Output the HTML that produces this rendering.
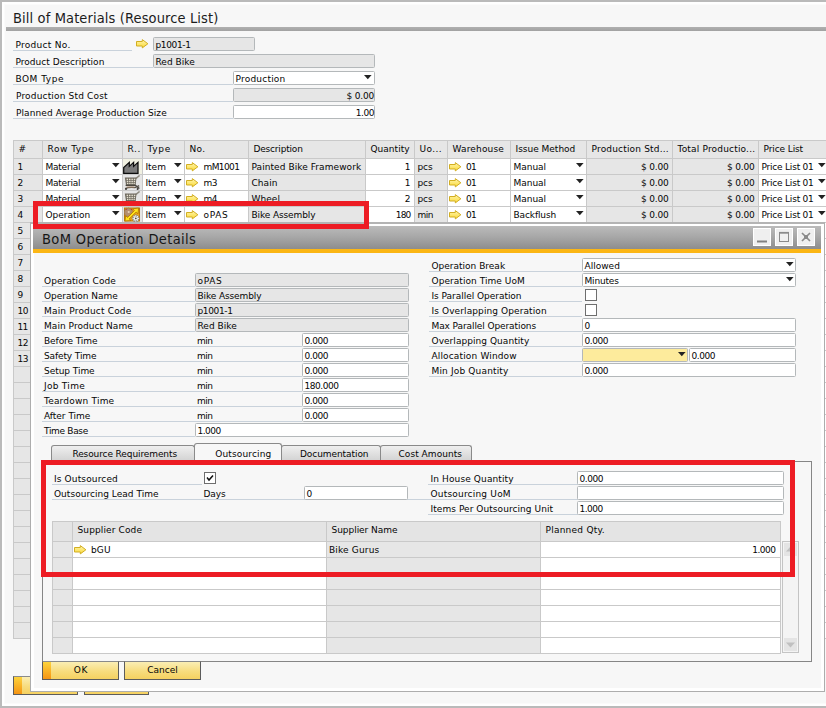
<!DOCTYPE html>
<html><head><meta charset="utf-8"><title>Bill of Materials (Resource List)</title>
<style>
html,body{margin:0;padding:0}
body{width:826px;height:708px;overflow:hidden;background:#f7f7f7;position:relative;font-family:"DejaVu Sans","Liberation Sans",sans-serif;font-size:9px;letter-spacing:0;line-height:12px;color:#050505}
div,svg{position:absolute;box-sizing:border-box}
.t{white-space:nowrap;line-height:12px}
.lb{height:14px;border-bottom:1px solid #c9d2db;white-space:nowrap;line-height:12px;padding-top:2px}
.fd{height:14px;border:1px solid #b4b8ba;border-radius:1.5px;background:#fff;line-height:12px;padding:1px 2px 0 1.5px;white-space:nowrap}
.fd.dis{background:#e6e6e6}
.fd.r{text-align:right;padding-right:0}
.fd.y{background:#fdeb9c}
.ttl{font-family:"DejaVu Sans Condensed","Liberation Sans",sans-serif;font-size:14.5px;line-height:20px;color:#1c1c1c;white-space:nowrap;letter-spacing:0}
.g{background:#e6e6e6}
.w{background:#fff}
.hl{background:#c9c9c9;height:1px}
.vl{background:#c9c9c9;width:1px}
.red{border:5px solid #ed1c24}
.cb{width:12px;height:12px;border:1px solid #6e6e6e;background:#fff}
.btn{border:1px solid #5c5c5c;background:linear-gradient(#fbeeb4,#f7dc7e 55%,#f5d160);text-align:center;line-height:17px;height:19px;border-top-color:#8a8a8a}
.btn i{position:absolute;left:0;top:0;width:8px;height:17px;background:linear-gradient(#fdd33c,#f59413)}
.tab{border:1px solid #8a8a8a;border-bottom:none;border-radius:3px 3px 0 0;background:linear-gradient(#efefef,#d2d2d2);text-align:center;white-space:nowrap}
.tab.on{background:#f7f7f7}
.wb{width:18px;height:18px;border:1px solid #fff;background:#efefef}
</style></head><body>
<svg width="0" height="0" style="left:0;top:0"><defs><linearGradient id="ag" x1="0" y1="0" x2="0" y2="1"><stop offset="0" stop-color="#fff6b0"/><stop offset="1" stop-color="#fbd935"/></linearGradient></defs></svg>

<!-- main window -->
<div class="" style="left:0px;top:0px;width:840px;height:708px;border:2px solid #bababa;border-right:none;box-shadow:inset 0 0 0 2px #fff, inset 0 0 0 3px #fbfbfb"></div>
<div class="ttl" style="left:13px;top:8px;letter-spacing:0.12px">Bill of Materials (Resource List)</div>
<div class="" style="left:6px;top:27px;width:830px;height:4px;background:linear-gradient(#b0b0b0,#a2a2a2)"></div>
<div class="lb" style="left:13px;top:37px;width:119px;padding-left:2.5px;letter-spacing:0.28px;">Product No.</div>
<div class="lb" style="left:13px;top:54px;width:140px;padding-left:2.5px;letter-spacing:0.03px;">Product Description</div>
<div class="lb" style="left:13px;top:71px;width:220px;padding-left:2.5px;letter-spacing:0.51px;">BOM Type</div>
<div class="lb" style="left:13px;top:88px;width:220px;padding-left:3px;letter-spacing:0.17px;">Production Std Cost</div>
<div class="lb" style="left:13px;top:105px;width:220px;padding-left:3px;letter-spacing:0.09px;">Planned Average Production Size</div>
<svg class="ar" style="left:136px;top:39px" width="13" height="10" viewBox="0 0 13 10"><path d="M0.5 2.5H6.3V0.6L11.9 4.75L6.3 8.9V7H0.5Z" fill="url(#ag)" stroke="#d2ae22" stroke-width="1" stroke-linejoin="round"/></svg>
<div class="fd dis" style="left:153px;top:37px;width:102px;letter-spacing:-0.37px;">p1001-1</div>
<div class="fd dis" style="left:153px;top:54px;width:222px;letter-spacing:0.02px;">Red Bike</div>
<div class="fd" style="left:233px;top:71px;width:142px;letter-spacing:0.21px;">Production</div>
<svg class="ar" style="left:364px;top:75px" width="8" height="5" viewBox="0 0 8 5"><path d="M0 0H7.6L3.8 4.3Z" fill="#222"/></svg>
<div class="fd dis r" style="left:233px;top:88px;width:142px;letter-spacing:-0.19px;">$ 0.00</div>
<div class="fd r" style="left:233px;top:105px;width:142px;letter-spacing:-0.46px;">1.00</div>
<!-- main grid -->
<div class="g" style="left:13px;top:140px;width:827px;height:499px;"></div>
<div class="w" style="left:42px;top:158px;width:80px;height:480px;"></div>
<div class="w" style="left:142px;top:158px;width:42px;height:480px;"></div>
<div class="w" style="left:184px;top:158px;width:64px;height:480px;"></div>
<div class="w" style="left:365px;top:158px;width:49px;height:480px;"></div>
<div class="w" style="left:447px;top:158px;width:63px;height:480px;"></div>
<div class="w" style="left:510px;top:158px;width:76px;height:480px;"></div>
<div class="w" style="left:758px;top:158px;width:82px;height:480px;"></div>
<div class="" style="left:122px;top:158px;width:20px;height:16px;background:#f1f1e2"></div>
<div class="hl" style="left:13px;top:140px;width:827px;height:1px;"></div>
<div class="hl" style="left:13px;top:158px;width:827px;height:1px;"></div>
<div class="hl" style="left:13px;top:174px;width:827px;height:1px;"></div>
<div class="hl" style="left:13px;top:190px;width:827px;height:1px;"></div>
<div class="hl" style="left:13px;top:206px;width:827px;height:1px;"></div>
<div class="hl" style="left:13px;top:222px;width:827px;height:1px;"></div>
<div class="hl" style="left:13px;top:238px;width:827px;height:1px;"></div>
<div class="hl" style="left:13px;top:254px;width:827px;height:1px;"></div>
<div class="hl" style="left:13px;top:270px;width:827px;height:1px;"></div>
<div class="hl" style="left:13px;top:286px;width:827px;height:1px;"></div>
<div class="hl" style="left:13px;top:302px;width:827px;height:1px;"></div>
<div class="hl" style="left:13px;top:318px;width:827px;height:1px;"></div>
<div class="hl" style="left:13px;top:334px;width:827px;height:1px;"></div>
<div class="hl" style="left:13px;top:350px;width:827px;height:1px;"></div>
<div class="hl" style="left:13px;top:366px;width:827px;height:1px;"></div>
<div class="hl" style="left:13px;top:382px;width:827px;height:1px;"></div>
<div class="hl" style="left:13px;top:398px;width:827px;height:1px;"></div>
<div class="hl" style="left:13px;top:414px;width:827px;height:1px;"></div>
<div class="hl" style="left:13px;top:430px;width:827px;height:1px;"></div>
<div class="hl" style="left:13px;top:446px;width:827px;height:1px;"></div>
<div class="hl" style="left:13px;top:462px;width:827px;height:1px;"></div>
<div class="hl" style="left:13px;top:478px;width:827px;height:1px;"></div>
<div class="hl" style="left:13px;top:494px;width:827px;height:1px;"></div>
<div class="hl" style="left:13px;top:510px;width:827px;height:1px;"></div>
<div class="hl" style="left:13px;top:526px;width:827px;height:1px;"></div>
<div class="hl" style="left:13px;top:542px;width:827px;height:1px;"></div>
<div class="hl" style="left:13px;top:558px;width:827px;height:1px;"></div>
<div class="hl" style="left:13px;top:574px;width:827px;height:1px;"></div>
<div class="hl" style="left:13px;top:590px;width:827px;height:1px;"></div>
<div class="hl" style="left:13px;top:606px;width:827px;height:1px;"></div>
<div class="hl" style="left:13px;top:622px;width:827px;height:1px;"></div>
<div class="hl" style="left:13px;top:638px;width:827px;height:1px;"></div>
<div class="vl" style="left:13px;top:140px;width:1px;height:499px;"></div>
<div class="vl" style="left:42px;top:140px;width:1px;height:499px;"></div>
<div class="vl" style="left:122px;top:140px;width:1px;height:499px;"></div>
<div class="vl" style="left:142px;top:140px;width:1px;height:499px;"></div>
<div class="vl" style="left:184px;top:140px;width:1px;height:499px;"></div>
<div class="vl" style="left:248px;top:140px;width:1px;height:499px;"></div>
<div class="vl" style="left:365px;top:140px;width:1px;height:499px;"></div>
<div class="vl" style="left:414px;top:140px;width:1px;height:499px;"></div>
<div class="vl" style="left:447px;top:140px;width:1px;height:499px;"></div>
<div class="vl" style="left:510px;top:140px;width:1px;height:499px;"></div>
<div class="vl" style="left:586px;top:140px;width:1px;height:499px;"></div>
<div class="vl" style="left:672px;top:140px;width:1px;height:499px;"></div>
<div class="vl" style="left:758px;top:140px;width:1px;height:499px;"></div>
<div class="t " style="left:18.5px;top:143px;">#</div>
<div class="t " style="left:47.5px;top:143px;letter-spacing:0.54px;">Row Type</div>
<div class="t " style="left:127.5px;top:143px;letter-spacing:0.61px;">R..</div>
<div class="t " style="left:147.5px;top:143px;letter-spacing:0.68px;">Type</div>
<div class="t " style="left:189.5px;top:143px;letter-spacing:0.35px;">No.</div>
<div class="t " style="left:253.5px;top:143px;letter-spacing:-0.19px;">Description</div>
<div class="t " style="left:370.5px;top:143px;letter-spacing:0.02px;">Quantity</div>
<div class="t " style="left:419.5px;top:143px;letter-spacing:0.41px;">Uo...</div>
<div class="t " style="left:452.5px;top:143px;letter-spacing:0.17px;">Warehouse</div>
<div class="t " style="left:515.5px;top:143px;letter-spacing:-0.01px;">Issue Method</div>
<div class="t " style="left:591.5px;top:143px;letter-spacing:0.18px;">Production Std...</div>
<div class="t " style="left:677.5px;top:143px;letter-spacing:0.18px;">Total Productio...</div>
<div class="t " style="left:763.5px;top:143px;letter-spacing:-0.10px;">Price List</div>
<div class="t " style="left:17.5px;top:161px;">1</div>
<div class="t " style="left:45.5px;top:161px;letter-spacing:-0.23px;">Material</div>
<div class="t " style="left:145.5px;top:161px;letter-spacing:-0.03px;">Item</div>
<svg class="ar" style="left:186px;top:162px" width="13" height="10" viewBox="0 0 13 10"><path d="M0.5 2.5H6.3V0.6L11.9 4.75L6.3 8.9V7H0.5Z" fill="url(#ag)" stroke="#d2ae22" stroke-width="1" stroke-linejoin="round"/></svg>
<div class="t " style="left:203.5px;top:161px;letter-spacing:-0.59px;">mM1001</div>
<div class="t " style="left:251.5px;top:161px;letter-spacing:0.07px;">Painted Bike Framework</div>
<div class="t " style="left:365px;top:161px;width:45.5px;text-align:right;">1</div>
<div class="t " style="left:417.5px;top:161px;letter-spacing:-0.12px;">pcs</div>
<svg class="ar" style="left:449px;top:162px" width="13" height="10" viewBox="0 0 13 10"><path d="M0.5 2.5H6.3V0.6L11.9 4.75L6.3 8.9V7H0.5Z" fill="url(#ag)" stroke="#d2ae22" stroke-width="1" stroke-linejoin="round"/></svg>
<div class="t " style="left:466px;top:161px;letter-spacing:-0.73px;">01</div>
<div class="t " style="left:513.5px;top:161px;letter-spacing:-0.02px;">Manual</div>
<div class="t " style="left:586px;top:161px;width:82.5px;text-align:right;letter-spacing:-0.19px;">$ 0.00</div>
<div class="t " style="left:672px;top:161px;width:82.5px;text-align:right;letter-spacing:-0.19px;">$ 0.00</div>
<div class="t " style="left:761.5px;top:161px;letter-spacing:-0.21px;">Price List 01</div>
<svg class="ar" style="left:111.5px;top:163px" width="8" height="5" viewBox="0 0 8 5"><path d="M0 0H7.6L3.8 4.3Z" fill="#222"/></svg>
<svg class="ar" style="left:173.8px;top:163px" width="8" height="5" viewBox="0 0 8 5"><path d="M0 0H7.6L3.8 4.3Z" fill="#222"/></svg>
<svg class="ar" style="left:576.2px;top:163px" width="8" height="5" viewBox="0 0 8 5"><path d="M0 0H7.6L3.8 4.3Z" fill="#222"/></svg>
<svg class="ar" style="left:818.3px;top:163px" width="8" height="5" viewBox="0 0 8 5"><path d="M0 0H7.6L3.8 4.3Z" fill="#222"/></svg>
<div class="t " style="left:17.5px;top:177px;">2</div>
<div class="t " style="left:45.5px;top:177px;letter-spacing:-0.23px;">Material</div>
<div class="t " style="left:145.5px;top:177px;letter-spacing:-0.03px;">Item</div>
<svg class="ar" style="left:186px;top:178px" width="13" height="10" viewBox="0 0 13 10"><path d="M0.5 2.5H6.3V0.6L11.9 4.75L6.3 8.9V7H0.5Z" fill="url(#ag)" stroke="#d2ae22" stroke-width="1" stroke-linejoin="round"/></svg>
<div class="t " style="left:203.5px;top:177px;letter-spacing:-0.55px;">m3</div>
<div class="t " style="left:251.5px;top:177px;letter-spacing:0.06px;">Chain</div>
<div class="t " style="left:365px;top:177px;width:45.5px;text-align:right;">1</div>
<div class="t " style="left:417.5px;top:177px;letter-spacing:-0.12px;">pcs</div>
<svg class="ar" style="left:449px;top:178px" width="13" height="10" viewBox="0 0 13 10"><path d="M0.5 2.5H6.3V0.6L11.9 4.75L6.3 8.9V7H0.5Z" fill="url(#ag)" stroke="#d2ae22" stroke-width="1" stroke-linejoin="round"/></svg>
<div class="t " style="left:466px;top:177px;letter-spacing:-0.73px;">01</div>
<div class="t " style="left:513.5px;top:177px;letter-spacing:-0.02px;">Manual</div>
<div class="t " style="left:586px;top:177px;width:82.5px;text-align:right;letter-spacing:-0.19px;">$ 0.00</div>
<div class="t " style="left:672px;top:177px;width:82.5px;text-align:right;letter-spacing:-0.19px;">$ 0.00</div>
<div class="t " style="left:761.5px;top:177px;letter-spacing:-0.21px;">Price List 01</div>
<svg class="ar" style="left:111.5px;top:179px" width="8" height="5" viewBox="0 0 8 5"><path d="M0 0H7.6L3.8 4.3Z" fill="#222"/></svg>
<svg class="ar" style="left:173.8px;top:179px" width="8" height="5" viewBox="0 0 8 5"><path d="M0 0H7.6L3.8 4.3Z" fill="#222"/></svg>
<svg class="ar" style="left:576.2px;top:179px" width="8" height="5" viewBox="0 0 8 5"><path d="M0 0H7.6L3.8 4.3Z" fill="#222"/></svg>
<svg class="ar" style="left:818.3px;top:179px" width="8" height="5" viewBox="0 0 8 5"><path d="M0 0H7.6L3.8 4.3Z" fill="#222"/></svg>
<div class="t " style="left:17.5px;top:193px;">3</div>
<div class="t " style="left:45.5px;top:193px;letter-spacing:-0.23px;">Material</div>
<div class="t " style="left:145.5px;top:193px;letter-spacing:-0.03px;">Item</div>
<svg class="ar" style="left:186px;top:194px" width="13" height="10" viewBox="0 0 13 10"><path d="M0.5 2.5H6.3V0.6L11.9 4.75L6.3 8.9V7H0.5Z" fill="url(#ag)" stroke="#d2ae22" stroke-width="1" stroke-linejoin="round"/></svg>
<div class="t " style="left:203.5px;top:193px;letter-spacing:-0.50px;">m4</div>
<div class="t " style="left:251.5px;top:193px;letter-spacing:0.06px;">Wheel</div>
<div class="t " style="left:365px;top:193px;width:45.5px;text-align:right;">2</div>
<div class="t " style="left:417.5px;top:193px;letter-spacing:-0.12px;">pcs</div>
<svg class="ar" style="left:449px;top:194px" width="13" height="10" viewBox="0 0 13 10"><path d="M0.5 2.5H6.3V0.6L11.9 4.75L6.3 8.9V7H0.5Z" fill="url(#ag)" stroke="#d2ae22" stroke-width="1" stroke-linejoin="round"/></svg>
<div class="t " style="left:466px;top:193px;letter-spacing:-0.73px;">01</div>
<div class="t " style="left:513.5px;top:193px;letter-spacing:-0.02px;">Manual</div>
<div class="t " style="left:586px;top:193px;width:82.5px;text-align:right;letter-spacing:-0.19px;">$ 0.00</div>
<div class="t " style="left:672px;top:193px;width:82.5px;text-align:right;letter-spacing:-0.19px;">$ 0.00</div>
<div class="t " style="left:761.5px;top:193px;letter-spacing:-0.21px;">Price List 01</div>
<svg class="ar" style="left:111.5px;top:195px" width="8" height="5" viewBox="0 0 8 5"><path d="M0 0H7.6L3.8 4.3Z" fill="#222"/></svg>
<svg class="ar" style="left:173.8px;top:195px" width="8" height="5" viewBox="0 0 8 5"><path d="M0 0H7.6L3.8 4.3Z" fill="#222"/></svg>
<svg class="ar" style="left:576.2px;top:195px" width="8" height="5" viewBox="0 0 8 5"><path d="M0 0H7.6L3.8 4.3Z" fill="#222"/></svg>
<svg class="ar" style="left:818.3px;top:195px" width="8" height="5" viewBox="0 0 8 5"><path d="M0 0H7.6L3.8 4.3Z" fill="#222"/></svg>
<div class="t " style="left:17.5px;top:209px;">4</div>
<div class="t " style="left:45.5px;top:209px;letter-spacing:-0.01px;">Operation</div>
<div class="t " style="left:145.5px;top:209px;letter-spacing:-0.03px;">Item</div>
<svg class="ar" style="left:186px;top:210px" width="13" height="10" viewBox="0 0 13 10"><path d="M0.5 2.5H6.3V0.6L11.9 4.75L6.3 8.9V7H0.5Z" fill="url(#ag)" stroke="#d2ae22" stroke-width="1" stroke-linejoin="round"/></svg>
<div class="t " style="left:203.5px;top:209px;letter-spacing:0.67px;">oPAS</div>
<div class="t " style="left:251.5px;top:209px;letter-spacing:-0.11px;">Bike Assembly</div>
<div class="t " style="left:365px;top:209px;width:45.5px;text-align:right;letter-spacing:-0.83px;">180</div>
<div class="t " style="left:417.5px;top:209px;letter-spacing:-0.49px;">min</div>
<svg class="ar" style="left:449px;top:210px" width="13" height="10" viewBox="0 0 13 10"><path d="M0.5 2.5H6.3V0.6L11.9 4.75L6.3 8.9V7H0.5Z" fill="url(#ag)" stroke="#d2ae22" stroke-width="1" stroke-linejoin="round"/></svg>
<div class="t " style="left:466px;top:209px;letter-spacing:-0.73px;">01</div>
<div class="t " style="left:513.5px;top:209px;letter-spacing:-0.11px;">Backflush</div>
<div class="t " style="left:586px;top:209px;width:82.5px;text-align:right;letter-spacing:-0.19px;">$ 0.00</div>
<div class="t " style="left:672px;top:209px;width:82.5px;text-align:right;letter-spacing:-0.19px;">$ 0.00</div>
<div class="t " style="left:761.5px;top:209px;letter-spacing:-0.21px;">Price List 01</div>
<svg class="ar" style="left:111.5px;top:211px" width="8" height="5" viewBox="0 0 8 5"><path d="M0 0H7.6L3.8 4.3Z" fill="#222"/></svg>
<svg class="ar" style="left:173.8px;top:211px" width="8" height="5" viewBox="0 0 8 5"><path d="M0 0H7.6L3.8 4.3Z" fill="#222"/></svg>
<svg class="ar" style="left:576.2px;top:211px" width="8" height="5" viewBox="0 0 8 5"><path d="M0 0H7.6L3.8 4.3Z" fill="#222"/></svg>
<svg class="ar" style="left:818.3px;top:211px" width="8" height="5" viewBox="0 0 8 5"><path d="M0 0H7.6L3.8 4.3Z" fill="#222"/></svg>
<div class="t " style="left:17.5px;top:225px;">5</div>
<div class="t " style="left:17.5px;top:241px;">6</div>
<div class="t " style="left:17.5px;top:257px;">7</div>
<div class="t " style="left:17.5px;top:273px;">8</div>
<div class="t " style="left:17.5px;top:289px;">9</div>
<div class="t " style="left:17.5px;top:305px;letter-spacing:-0.53px;">10</div>
<div class="t " style="left:17.5px;top:321px;letter-spacing:-0.63px;">11</div>
<div class="t " style="left:17.5px;top:337px;letter-spacing:-0.53px;">12</div>
<div class="t " style="left:17.5px;top:353px;letter-spacing:-0.53px;">13</div>
<svg class="ar" style="left:123px;top:160px" width="17" height="14" viewBox="0 0 17 14"><path d="M0.7 13.3V7.6L6.3 2.4V6.4L10.6 2.4V6.4L15 2.4V13.3Z" fill="#7b7b7b" stroke="#0c0c0c" stroke-width="1.25" stroke-linejoin="miter"/></svg>
<svg class="ar" style="left:124px;top:175px" width="17" height="15" viewBox="0 0 17 15"><path d="M12 3.4L15.6 0.5" stroke="#8f8b80" stroke-width="1.5" fill="none"/><path d="M0.8 2.6H12.6L11.6 10H2Z" fill="#6e695e"/><g fill="#e6e2d2"><rect x="2.6" y="3.7" width="1.5" height="1.4"/><rect x="5" y="3.7" width="1.5" height="1.4"/><rect x="7.4" y="3.7" width="1.5" height="1.4"/><rect x="9.8" y="3.7" width="1.5" height="1.4"/><rect x="2.8" y="5.8" width="1.5" height="1.4"/><rect x="5.1" y="5.8" width="1.5" height="1.4"/><rect x="7.4" y="5.8" width="1.5" height="1.4"/><rect x="9.7" y="5.8" width="1.4" height="1.4"/><rect x="3" y="7.9" width="1.4" height="1.3"/><rect x="5.2" y="7.9" width="1.4" height="1.3"/><rect x="7.4" y="7.9" width="1.4" height="1.3"/><rect x="9.5" y="7.9" width="1.3" height="1.3"/></g><path d="M1.6 10.4H11.5L15.4 13.6" stroke="#4a463e" stroke-width="1.3" fill="none"/><path d="M1.2 13.7C4 12.2 8 12.3 11 12.6L15.2 10.6" stroke="#57524a" stroke-width="1.4" fill="none"/><path d="M2.6 12H10.6" stroke="#b08a6a" stroke-width="0.9"/><circle cx="2" cy="13.9" r="1" fill="#3c3a36"/><circle cx="13.6" cy="13.9" r="1" fill="#3c3a36"/></svg>
<svg class="ar" style="left:124px;top:191px" width="17" height="15" viewBox="0 0 17 15"><path d="M12 3.4L15.6 0.5" stroke="#8f8b80" stroke-width="1.5" fill="none"/><path d="M0.8 2.6H12.6L11.6 10H2Z" fill="#6e695e"/><g fill="#e6e2d2"><rect x="2.6" y="3.7" width="1.5" height="1.4"/><rect x="5" y="3.7" width="1.5" height="1.4"/><rect x="7.4" y="3.7" width="1.5" height="1.4"/><rect x="9.8" y="3.7" width="1.5" height="1.4"/><rect x="2.8" y="5.8" width="1.5" height="1.4"/><rect x="5.1" y="5.8" width="1.5" height="1.4"/><rect x="7.4" y="5.8" width="1.5" height="1.4"/><rect x="9.7" y="5.8" width="1.4" height="1.4"/><rect x="3" y="7.9" width="1.4" height="1.3"/><rect x="5.2" y="7.9" width="1.4" height="1.3"/><rect x="7.4" y="7.9" width="1.4" height="1.3"/><rect x="9.5" y="7.9" width="1.3" height="1.3"/></g><path d="M1.6 10.4H11.5L15.4 13.6" stroke="#4a463e" stroke-width="1.3" fill="none"/><path d="M1.2 13.7C4 12.2 8 12.3 11 12.6L15.2 10.6" stroke="#57524a" stroke-width="1.4" fill="none"/><path d="M2.6 12H10.6" stroke="#b08a6a" stroke-width="0.9"/><circle cx="2" cy="13.9" r="1" fill="#3c3a36"/><circle cx="13.6" cy="13.9" r="1" fill="#3c3a36"/></svg>
<svg class="ar" style="left:124px;top:207px" width="17" height="15" viewBox="0 0 17 15"><rect x="0.5" y="1" width="15" height="13" fill="#eda51c" stroke="#b8790c" stroke-width="1"/><path d="M4.6 0.8l.9 1.2 1.4-.5.2 1.5 1.5.3-.6 1.4 1.1 1-1.2.9.4 1.4-1.5.2-.4 1.4-1.4-.6-1 1.1-.9-1.2-1.4.4-.2-1.5-1.4-.4.6-1.3-1-1.1 1.2-.9-.4-1.4 1.5-.2.4-1.4 1.3.6z" fill="#b48e6e" stroke="#8a6a50" stroke-width="0.4"/><circle cx="4.7" cy="5" r="1.1" fill="#e7d2b8"/><circle cx="2.2" cy="2.3" r="0.6" fill="#e0202a"/><circle cx="7.6" cy="2.4" r="0.6" fill="#e0202a"/><path d="M1 14L1.6 8.6L3.5 10.4L10.4 3.6L8.6 1.8L14.6 1L14 6.8L12.2 5L5.2 12L7 13.6Z" fill="#ffe41a" stroke="#b37b06" stroke-width="0.9" stroke-linejoin="round"/><g transform="translate(11.8 11.4)"><g fill="#fbfbf6" stroke="#5e5e58" stroke-width="0.5"><ellipse cx="0" cy="-2.3" rx="1.1" ry="1.4"/><ellipse cx="0" cy="2.3" rx="1.1" ry="1.4"/><ellipse cx="-2.3" cy="0" rx="1.4" ry="1.1"/><ellipse cx="2.3" cy="0" rx="1.4" ry="1.1"/><ellipse cx="-1.7" cy="-1.7" rx="1.1" ry="1.1"/><ellipse cx="1.7" cy="-1.7" rx="1.1" ry="1.1"/><ellipse cx="-1.7" cy="1.7" rx="1.1" ry="1.1"/><ellipse cx="1.7" cy="1.7" rx="1.1" ry="1.1"/></g><circle r="1.9" fill="#fbfbf6"/><circle r="0.9" fill="#4a4a46"/></g></svg>
<div class="btn" style="left:13px;top:676px;width:65px;height:19px;"><i></i></div>
<div class="btn" style="left:84px;top:676px;width:65px;height:19px;"></div>
<div class="red" style="left:33px;top:201px;width:336px;height:28px;"></div>
<!-- dialog -->
<div class="" style="left:30px;top:222px;width:795px;height:470px;border:1px solid #adadad;border-top:2px solid #b4b4b4;background:#f7f7f7;box-shadow:inset 0 0 0 3px #fff"></div>
<div class="" style="left:33px;top:226px;width:788px;height:23px;background:linear-gradient(#bbbbbb,#a6a6a6 50%,#8d8d8d)"></div>
<div class="" style="left:33px;top:249px;width:788px;height:4px;background:#fbb615"></div>
<div class="ttl" style="left:42px;top:229px;color:#161616;letter-spacing:0.36px">BoM Operation Details</div>
<div class="wb" style="left:753px;top:228px"><svg style="left:0;top:0" width="16" height="16" viewBox="0 0 16 16"><path d="M3 12.5H13" stroke="#808080" stroke-width="2"/></svg></div>
<div class="wb" style="left:775px;top:228px"><svg style="left:0;top:0" width="16" height="16" viewBox="0 0 16 16"><rect x="3.5" y="3.5" width="9" height="9" fill="none" stroke="#8a8a8a" stroke-width="1"/><path d="M3 3.8H13" stroke="#8a8a8a" stroke-width="1.8"/></svg></div>
<div class="wb" style="left:797px;top:228px"><svg style="left:0;top:0" width="16" height="16" viewBox="0 0 16 16"><path d="M4 4L12 12M12 4L4 12" stroke="#8a8a8a" stroke-width="1.7"/><rect x="6" y="6" width="4" height="4" fill="#8a8a8a"/></svg></div>
<div class="red" style="left:33px;top:201px;width:336px;height:28px;"></div>
<div class="lb" style="left:42px;top:273px;width:153px;padding-left:2px;letter-spacing:0.09px;">Operation Code</div>
<div class="lb" style="left:42px;top:288px;width:153px;padding-left:2px;letter-spacing:-0.03px;">Operation Name</div>
<div class="lb" style="left:42px;top:303px;width:153px;padding-left:2px;letter-spacing:0.18px;">Main Product Code</div>
<div class="lb" style="left:42px;top:318px;width:153px;padding-left:2px;letter-spacing:0.05px;">Main Product Name</div>
<div class="lb" style="left:42px;top:333px;width:260px;padding-left:2px;letter-spacing:-0.08px;">Before Time</div>
<div class="lb" style="left:42px;top:348px;width:260px;padding-left:2px;letter-spacing:-0.12px;">Safety Time</div>
<div class="lb" style="left:42px;top:363px;width:260px;padding-left:2px;letter-spacing:-0.05px;">Setup Time</div>
<div class="lb" style="left:42px;top:378px;width:260px;padding-left:2px;letter-spacing:0.28px;">Job Time</div>
<div class="lb" style="left:42px;top:393px;width:260px;padding-left:2px;letter-spacing:0.20px;">Teardown Time</div>
<div class="lb" style="left:42px;top:408px;width:260px;padding-left:2px;letter-spacing:-0.01px;">After Time</div>
<div class="lb" style="left:42px;top:423px;width:153px;padding-left:2px;letter-spacing:-0.32px;">Time Base</div>
<div class="fd dis" style="left:195px;top:273px;width:214px;letter-spacing:0.67px;">oPAS</div>
<div class="fd dis" style="left:195px;top:288px;width:214px;letter-spacing:-0.11px;">Bike Assembly</div>
<div class="fd dis" style="left:195px;top:303px;width:214px;letter-spacing:-0.37px;">p1001-1</div>
<div class="fd dis" style="left:195px;top:318px;width:214px;letter-spacing:0.02px;">Red Bike</div>
<div class="t " style="left:197px;top:335px;letter-spacing:-0.49px;">min</div>
<div class="fd" style="left:302px;top:333px;width:107px;letter-spacing:-0.43px;">0.000</div>
<div class="t " style="left:197px;top:350px;letter-spacing:-0.49px;">min</div>
<div class="fd" style="left:302px;top:348px;width:107px;letter-spacing:-0.43px;">0.000</div>
<div class="t " style="left:197px;top:365px;letter-spacing:-0.49px;">min</div>
<div class="fd" style="left:302px;top:363px;width:107px;letter-spacing:-0.43px;">0.000</div>
<div class="t " style="left:197px;top:380px;letter-spacing:-0.49px;">min</div>
<div class="fd" style="left:302px;top:378px;width:107px;letter-spacing:-0.46px;">180.000</div>
<div class="t " style="left:197px;top:395px;letter-spacing:-0.49px;">min</div>
<div class="fd" style="left:302px;top:393px;width:107px;letter-spacing:-0.43px;">0.000</div>
<div class="t " style="left:197px;top:410px;letter-spacing:-0.49px;">min</div>
<div class="fd" style="left:302px;top:408px;width:107px;letter-spacing:-0.43px;">0.000</div>
<div class="fd" style="left:195px;top:423px;width:214px;letter-spacing:-0.51px;">1.000</div>
<div class="lb" style="left:429px;top:258px;width:153px;padding-left:2.5px;letter-spacing:0.00px;">Operation Break</div>
<div class="lb" style="left:429px;top:273px;width:153px;padding-left:2.5px;letter-spacing:0.05px;">Operation Time UoM</div>
<div class="lb" style="left:429px;top:288px;width:153px;padding-left:2.5px;letter-spacing:-0.03px;">Is Parallel Operation</div>
<div class="lb" style="left:429px;top:303px;width:153px;padding-left:2.5px;letter-spacing:0.10px;">Is Overlapping Operation</div>
<div class="lb" style="left:429px;top:318px;width:153px;padding-left:2.5px;letter-spacing:-0.09px;">Max Parallel Operations</div>
<div class="lb" style="left:429px;top:333px;width:153px;padding-left:2.5px;letter-spacing:0.05px;">Overlapping Quantity</div>
<div class="lb" style="left:429px;top:348px;width:153px;padding-left:2.5px;letter-spacing:0.15px;">Allocation Window</div>
<div class="lb" style="left:429px;top:363px;width:153px;padding-left:2.5px;letter-spacing:0.16px;">Min Job Quantity</div>
<div class="fd" style="left:582px;top:258px;width:214px;letter-spacing:0.02px;">Allowed</div>
<svg class="ar" style="left:786px;top:262px" width="8" height="5" viewBox="0 0 8 5"><path d="M0 0H7.6L3.8 4.3Z" fill="#222"/></svg>
<div class="fd" style="left:582px;top:273px;width:214px;letter-spacing:-0.18px;">Minutes</div>
<svg class="ar" style="left:786px;top:277px" width="8" height="5" viewBox="0 0 8 5"><path d="M0 0H7.6L3.8 4.3Z" fill="#222"/></svg>
<div class="cb" style="left:585px;top:289px;width:12px;height:12px;"></div>
<div class="cb" style="left:585px;top:304px;width:12px;height:12px;"></div>
<div class="fd" style="left:582px;top:318px;width:214px;">0</div>
<div class="fd" style="left:582px;top:333px;width:214px;letter-spacing:-0.43px;">0.000</div>
<div class="fd y" style="left:582px;top:348px;width:106px;"></div>
<svg class="ar" style="left:678px;top:352px" width="8" height="5" viewBox="0 0 8 5"><path d="M0 0H7.6L3.8 4.3Z" fill="#222"/></svg>
<div class="fd" style="left:689px;top:348px;width:107px;letter-spacing:-0.43px;">0.000</div>
<div class="fd" style="left:582px;top:363px;width:214px;letter-spacing:-0.43px;">0.000</div>
<div class="" style="left:42px;top:461px;width:770px;height:201px;border:1px solid #868686;background:#f7f7f7"></div>
<div class="tab" style="left:51px;top:445px;width:144px;height:16px"></div>
<div class="tab" style="left:281px;top:445px;width:100px;height:16px"></div>
<div class="tab" style="left:380px;top:445px;width:92px;height:16px"></div>
<div class="tab on" style="left:194px;top:443px;width:88px;height:19px"></div>
<div class="t " style="left:72.4px;top:448px;letter-spacing:-0.10px;">Resource Requirements</div>
<div class="t " style="left:215.2px;top:448px;letter-spacing:0.15px;">Outsourcing</div>
<div class="t " style="left:300px;top:448px;letter-spacing:-0.07px;">Documentation</div>
<div class="t " style="left:398.5px;top:448px;letter-spacing:0.05px;">Cost Amounts</div>
<div class="lb" style="left:52px;top:471px;width:150px;padding-left:2px;letter-spacing:0.14px;">Is Outsourced</div>
<div class="lb" style="left:52px;top:486px;width:376px;padding-left:2px;letter-spacing:0.03px;">Outsourcing Lead Time</div>
<div class="cb" style="left:204px;top:472px;width:12px;height:12px;"><svg style="left:0;top:0" width="10" height="10" viewBox="0 0 10 10"><path d="M2 4.6L4 7L8 2.4" fill="none" stroke="#111" stroke-width="1.5"/></svg></div>
<div class="t " style="left:203.5px;top:488px;letter-spacing:-0.07px;">Days</div>
<div class="fd" style="left:304px;top:486px;width:104px;">0</div>
<div class="lb" style="left:428px;top:471px;width:150px;padding-left:2.5px;letter-spacing:0.12px;">In House Quantity</div>
<div class="lb" style="left:428px;top:486px;width:150px;padding-left:2.5px;letter-spacing:0.20px;">Outsourcing UoM</div>
<div class="lb" style="left:428px;top:501px;width:150px;padding-left:2.5px;letter-spacing:0.06px;">Items Per Outsourcing Unit</div>
<div class="fd" style="left:577px;top:471px;width:207px;letter-spacing:-0.43px;">0.000</div>
<div class="fd" style="left:577px;top:486px;width:207px;"></div>
<div class="fd" style="left:577px;top:501px;width:207px;letter-spacing:-0.51px;">1.000</div>
<div class="w" style="left:52px;top:521px;width:729px;height:133px;"></div>
<div class="" style="left:52px;top:521px;width:729px;height:20px;background:#e4e4e4"></div>
<div class="g" style="left:52px;top:541px;width:20px;height:112px;"></div>
<div class="g" style="left:326px;top:541px;width:214px;height:112px;"></div>
<div class="hl" style="left:52px;top:521px;width:729px;height:1px;"></div>
<div class="hl" style="left:52px;top:541px;width:729px;height:1px;"></div>
<div class="hl" style="left:52px;top:557px;width:729px;height:1px;"></div>
<div class="hl" style="left:52px;top:573px;width:729px;height:1px;"></div>
<div class="hl" style="left:52px;top:589px;width:729px;height:1px;"></div>
<div class="hl" style="left:52px;top:605px;width:729px;height:1px;"></div>
<div class="hl" style="left:52px;top:621px;width:729px;height:1px;"></div>
<div class="hl" style="left:52px;top:637px;width:729px;height:1px;"></div>
<div class="hl" style="left:52px;top:653px;width:729px;height:1px;"></div>
<div class="vl" style="left:52px;top:521px;width:1px;height:133px;"></div>
<div class="vl" style="left:72px;top:521px;width:1px;height:133px;"></div>
<div class="vl" style="left:326px;top:521px;width:1px;height:133px;"></div>
<div class="vl" style="left:540px;top:521px;width:1px;height:133px;"></div>
<div class="vl" style="left:780px;top:521px;width:1px;height:133px;"></div>
<div class="t " style="left:77.5px;top:524px;letter-spacing:0.12px;">Supplier Code</div>
<div class="t " style="left:331.5px;top:524px;letter-spacing:-0.04px;">Supplier Name</div>
<div class="t " style="left:545.5px;top:524px;letter-spacing:0.24px;">Planned Qty.</div>
<svg class="ar" style="left:74px;top:545px" width="13" height="10" viewBox="0 0 13 10"><path d="M0.5 2.5H6.3V0.6L11.9 4.75L6.3 8.9V7H0.5Z" fill="url(#ag)" stroke="#d2ae22" stroke-width="1" stroke-linejoin="round"/></svg>
<div class="t " style="left:91px;top:544px;letter-spacing:0.14px;">bGU</div>
<div class="t " style="left:329px;top:544px;letter-spacing:0.17px;">Bike Gurus</div>
<div class="t " style="left:700px;top:544px;width:75.5px;text-align:right;letter-spacing:-0.51px;">1.000</div>
<div class="" style="left:782px;top:541px;width:17px;height:112px;border:1px solid #c4c4c4;background:#f4f4f4"></div>
<div class="" style="left:784px;top:543px;width:13px;height:13px;background:#e4e4e4"></div>
<div class="" style="left:784px;top:638px;width:13px;height:13px;background:#e4e4e4"></div>
<svg class="ar" style="left:786px;top:546px" width="9" height="6" viewBox="0 0 9 6"><path d="M0 5.5H9L4.5 0.5Z" fill="#c0c0c0"/></svg>
<svg class="ar" style="left:786px;top:642px" width="9" height="6" viewBox="0 0 9 6"><path d="M0 0.5H9L4.5 5.5Z" fill="#c0c0c0"/></svg>
<div class="red" style="left:41px;top:460px;width:754px;height:117px;"></div>
<div class="btn" style="left:42px;top:661px;width:77px;height:19px;"><i></i><span style="position:relative;left:0.5px;letter-spacing:0.8px">OK</span></div>
<div class="btn" style="left:124px;top:661px;width:77px;height:19px;">Cancel</div>
</body></html>
